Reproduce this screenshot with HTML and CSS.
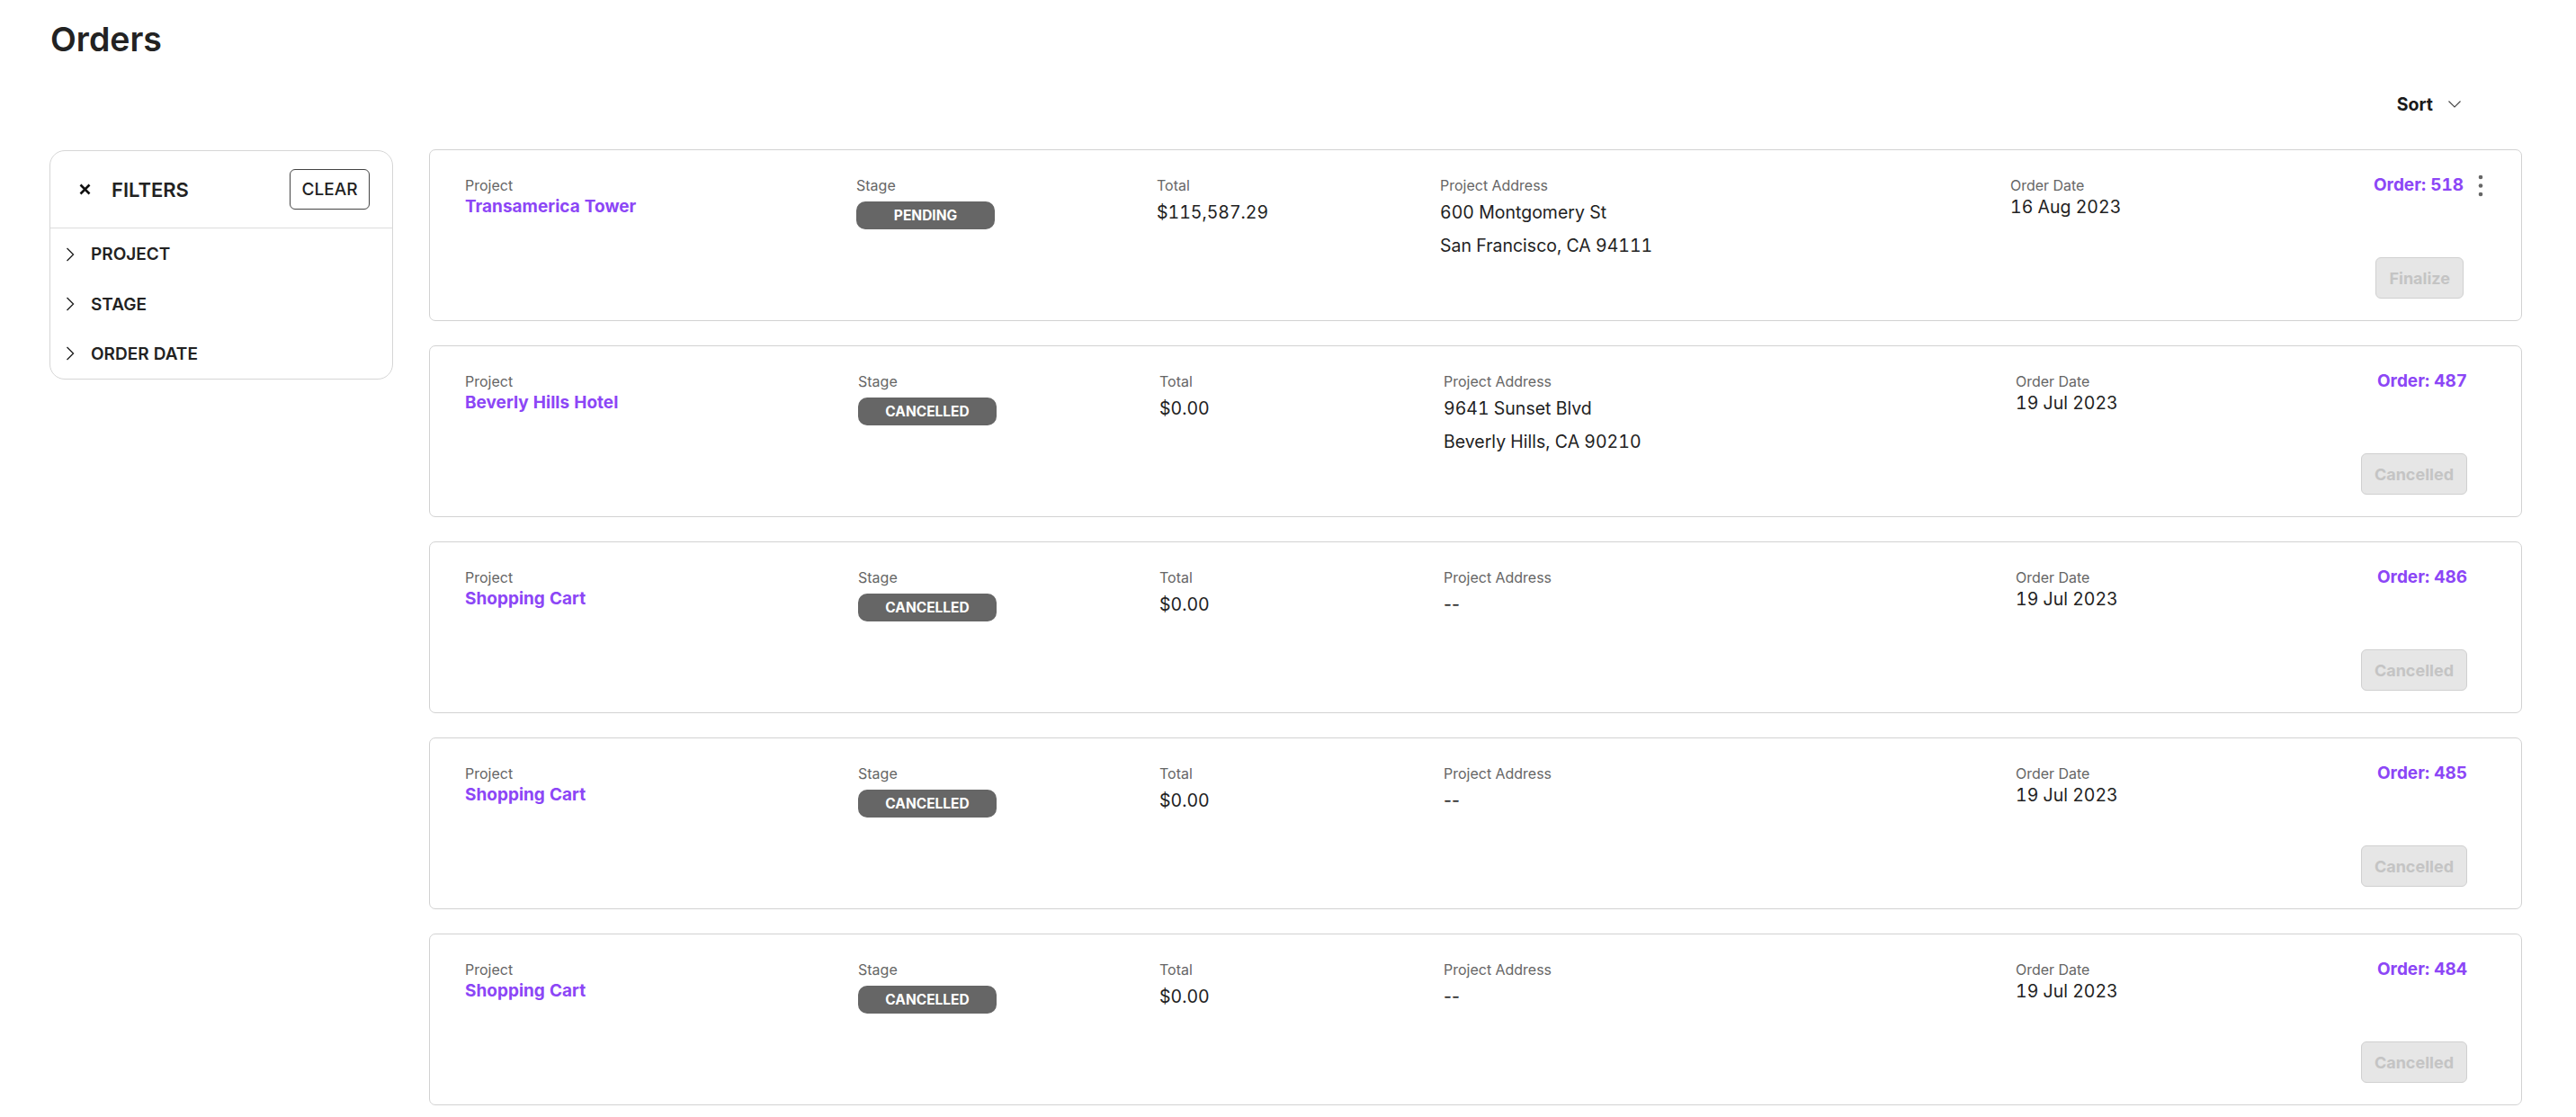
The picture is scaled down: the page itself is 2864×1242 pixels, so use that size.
FILE: index.html
```html
<!DOCTYPE html>
<html lang="en">
<head>
    <meta charset="UTF-8">
    <meta name="viewport" content="width=device-width, initial-scale=1.0">
    <title>Orders</title>
    <link rel="stylesheet" href="styles.css">
</head>
<body>

    <h1 class="page-title">Orders</h1>

    <div class="toolbar">
        <button class="sort-btn" type="button">
            Sort
            <svg class="sort-caret" width="14" height="8" viewBox="0 0 14 8"><path d="M0.5 0.5l6.5 6.5 6.5-6.5" fill="none" stroke="#444" stroke-width="1.1"/></svg>
        </button>
    </div>

    <div class="layout">
        <aside class="filters">
            <div class="filters-head">
                <svg class="close-icon" width="13" height="13" viewBox="0 0 13 13"><path d="M1.5 1.5l10 10M11.5 1.5l-10 10" stroke="#111" stroke-width="2.6"/></svg>
                <span class="filters-title">FILTERS</span>
                <button class="clear-btn" type="button">CLEAR</button>
            </div>
            <ul class="filter-list">
                <li class="filter-item">
                    <svg class="chevron" width="10" height="16" viewBox="0 0 10 16"><path d="M1.5 1l7 7-7 7" fill="none" stroke="#222" stroke-width="1.4"/></svg>
                    PROJECT
                </li>
                <li class="filter-item">
                    <svg class="chevron" width="10" height="16" viewBox="0 0 10 16"><path d="M1.5 1l7 7-7 7" fill="none" stroke="#222" stroke-width="1.4"/></svg>
                    STAGE
                </li>
                <li class="filter-item">
                    <svg class="chevron" width="10" height="16" viewBox="0 0 10 16"><path d="M1.5 1l7 7-7 7" fill="none" stroke="#222" stroke-width="1.4"/></svg>
                    ORDER DATE
                </li>
            </ul>
        </aside>

        <main class="order-list">

            <div class="order-card has-menu">
                <div class="field">
                    <div class="label">Project</div>
                    <a class="project-link" href="#">Transamerica Tower</a>
                </div>
                <div class="field">
                    <div class="label">Stage</div>
                    <span class="stage-badge">PENDING</span>
                </div>
                <div class="field">
                    <div class="label">Total</div>
                    <p class="value">$115,587.29</p>
                </div>
                <div class="field">
                    <div class="label">Project Address</div>
                    <p class="value">600 Montgomery St</p>
                    <p class="value">San Francisco, CA 94111</p>
                </div>
                <div class="field">
                    <div class="label">Order Date</div>
                    <div class="date">16 Aug 2023</div>
                </div>
                <div class="order-side">
                    <div class="order-no">Order: 518</div>
                    <button class="action-btn" type="button" disabled>Finalize</button>
                </div>
                <button class="more-btn" type="button">
                    <svg width="6" height="26" viewBox="0 0 6 26"><circle cx="3" cy="3" r="2.3"/><circle cx="3" cy="12.5" r="2.3"/><circle cx="3" cy="22" r="2.3"/></svg>
                </button>
            </div>

            <div class="order-card">
                <div class="field">
                    <div class="label">Project</div>
                    <a class="project-link" href="#">Beverly Hills Hotel</a>
                </div>
                <div class="field">
                    <div class="label">Stage</div>
                    <span class="stage-badge">CANCELLED</span>
                </div>
                <div class="field">
                    <div class="label">Total</div>
                    <p class="value">$0.00</p>
                </div>
                <div class="field">
                    <div class="label">Project Address</div>
                    <p class="value">9641 Sunset Blvd</p>
                    <p class="value">Beverly Hills, CA 90210</p>
                </div>
                <div class="field">
                    <div class="label">Order Date</div>
                    <div class="date">19 Jul 2023</div>
                </div>
                <div class="order-side">
                    <div class="order-no">Order: 487</div>
                    <button class="action-btn" type="button" disabled>Cancelled</button>
                </div>
            </div>

            <div class="order-card">
                <div class="field">
                    <div class="label">Project</div>
                    <a class="project-link" href="#">Shopping Cart</a>
                </div>
                <div class="field">
                    <div class="label">Stage</div>
                    <span class="stage-badge">CANCELLED</span>
                </div>
                <div class="field">
                    <div class="label">Total</div>
                    <p class="value">$0.00</p>
                </div>
                <div class="field">
                    <div class="label">Project Address</div>
                    <p class="value empty">--</p>
                </div>
                <div class="field">
                    <div class="label">Order Date</div>
                    <div class="date">19 Jul 2023</div>
                </div>
                <div class="order-side">
                    <div class="order-no">Order: 486</div>
                    <button class="action-btn" type="button" disabled>Cancelled</button>
                </div>
            </div>

            <div class="order-card">
                <div class="field">
                    <div class="label">Project</div>
                    <a class="project-link" href="#">Shopping Cart</a>
                </div>
                <div class="field">
                    <div class="label">Stage</div>
                    <span class="stage-badge">CANCELLED</span>
                </div>
                <div class="field">
                    <div class="label">Total</div>
                    <p class="value">$0.00</p>
                </div>
                <div class="field">
                    <div class="label">Project Address</div>
                    <p class="value empty">--</p>
                </div>
                <div class="field">
                    <div class="label">Order Date</div>
                    <div class="date">19 Jul 2023</div>
                </div>
                <div class="order-side">
                    <div class="order-no">Order: 485</div>
                    <button class="action-btn" type="button" disabled>Cancelled</button>
                </div>
            </div>

            <div class="order-card">
                <div class="field">
                    <div class="label">Project</div>
                    <a class="project-link" href="#">Shopping Cart</a>
                </div>
                <div class="field">
                    <div class="label">Stage</div>
                    <span class="stage-badge">CANCELLED</span>
                </div>
                <div class="field">
                    <div class="label">Total</div>
                    <p class="value">$0.00</p>
                </div>
                <div class="field">
                    <div class="label">Project Address</div>
                    <p class="value empty">--</p>
                </div>
                <div class="field">
                    <div class="label">Order Date</div>
                    <div class="date">19 Jul 2023</div>
                </div>
                <div class="order-side">
                    <div class="order-no">Order: 484</div>
                    <button class="action-btn" type="button" disabled>Cancelled</button>
                </div>
            </div>

        </main>
    </div>

</body>
</html>
```

FILE: styles.css
```css
body {
    font-family: 'Inter', 'Noto Sans', sans-serif;
    font-variant-numeric: tabular-nums;
    color: #222;
    background: #fff;
    margin: 0;
    padding: 0 60px 0 55px;
}

.page-title {
    margin: 21px 0 0 1px;
    font-size: 37.5px;
    line-height: 45px;
    font-weight: 600;
    color: #222;
}

.toolbar {
    display: flex;
    justify-content: flex-end;
    margin-top: 38px;
    padding-right: 68px;
}

.sort-btn {
    display: flex;
    align-items: center;
    gap: 17px;
    padding: 0;
    border: none;
    background: none;
    font-family: inherit;
    font-size: 19.5px;
    line-height: 24px;
    font-weight: 700;
    color: #1a1a1a;
    cursor: pointer;
}

.layout {
    display: flex;
    align-items: flex-start;
    gap: 40px;
    margin-top: 38px;
}

/* filter panel */

.filters {
    width: 382px;
    flex-shrink: 0;
    margin-top: 1px;
    border: 1px solid #d6d6d6;
    border-radius: 17px;
    box-sizing: border-box;
}

.filters-head {
    display: flex;
    align-items: center;
    padding: 20px 25px 20px 32px;
    border-bottom: 1px solid #dcdcdc;
}

.close-icon {
    margin-right: 23px;
}

.filters-title {
    font-size: 22px;
    font-weight: 600;
    color: #222;
}

.clear-btn {
    margin-left: auto;
    width: 89px;
    height: 45px;
    border: 1px solid #444;
    border-radius: 6px;
    background: #fff;
    font-family: inherit;
    font-size: 19px;
    font-weight: 500;
    color: #222;
    cursor: pointer;
}

.filter-list {
    list-style: none;
    margin: 0;
    padding: 1px 0 0;
}

.filter-item {
    display: flex;
    align-items: center;
    gap: 18px;
    height: 55.4px;
    padding-left: 17px;
    font-size: 19px;
    font-weight: 600;
    color: #222;
    cursor: pointer;
}

/* order cards */

.order-list {
    flex: 1;
    display: flex;
    flex-direction: column;
    gap: 27px;
}

.order-card {
    position: relative;
    display: grid;
    grid-template-columns: 437px 335px 316px 636px 1fr auto;
    padding: 29px 60px 24px 39px;
    border: 1px solid #d2d2d2;
    border-radius: 7px;
}

.order-card.has-menu {
    padding-right: 64px;
    grid-template-columns: 435px 334px 315px 634px 1fr auto;
}

.label {
    font-size: 16px;
    line-height: 20px;
    color: #666;
}

.project-link {
    display: block;
    margin-top: 2px;
    font-size: 19px;
    line-height: 24px;
    font-weight: 700;
    color: #8c46f6;
    text-decoration: none;
}

.stage-badge {
    display: inline-block;
    margin-top: 8px;
    width: 154px;
    height: 31px;
    line-height: 31px;
    border-radius: 10px;
    background-color: #666;
    color: #fff;
    font-size: 15.5px;
    font-weight: 700;
    text-align: center;
}

.value {
    margin: 0;
    font-size: 19.5px;
    line-height: 36.5px;
    color: #222;
}

.value.empty {
    font-variant-numeric: normal;
}

.field .label + .value {
    margin-top: 2px;
}

.date {
    margin-top: 2px;
    font-size: 19.5px;
    line-height: 24px;
    color: #222;
}

.order-side {
    display: flex;
    flex-direction: column;
    align-items: flex-end;
    justify-content: space-between;
    min-height: 136px;
}

.order-no {
    font-size: 19px;
    line-height: 20px;
    font-weight: 700;
    color: #8c46f6;
}

.action-btn {
    height: 46px;
    padding: 0 14px;
    border: 1px solid #d0d0d0;
    border-radius: 6px;
    background-color: #e6e6e6;
    font-family: inherit;
    font-size: 18px;
    font-weight: 700;
    color: #c4c4c4;
}

.more-btn {
    position: absolute;
    top: 27px;
    right: 42px;
    padding: 0;
    border: none;
    background: none;
    fill: #666;
    cursor: pointer;
}
```
